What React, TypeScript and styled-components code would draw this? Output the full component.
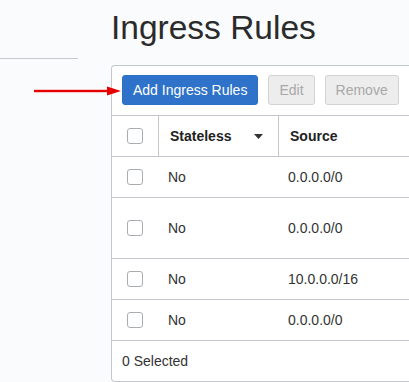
import React from "react";
import styled, { createGlobalStyle } from "styled-components";

type Rule = {
  id: number;
  stateless: string;
  source: string;
  tall?: boolean;
};

const rules: Rule[] = [
  { id: 1, stateless: "No", source: "0.0.0.0/0" },
  { id: 2, stateless: "No", source: "0.0.0.0/0", tall: true },
  { id: 3, stateless: "No", source: "10.0.0.0/16" },
  { id: 4, stateless: "No", source: "0.0.0.0/0" }
];

const App: React.FC = () => {
  return (
    <>
      <GlobalStyle />
      <Page>
        <Sidebar>
          <SidebarDivider />
        </Sidebar>
        <Main>
          <Title>Ingress Rules</Title>
          <Panel>
            <Toolbar>
              <ActionButton $variant="primary">Add Ingress Rules</ActionButton>
              <ActionButton $variant="disabled" disabled>
                Edit
              </ActionButton>
              <ActionButton $variant="disabled" disabled>
                Remove
              </ActionButton>
            </Toolbar>
            <HeaderRow>
              <CheckCell $header>
                <Checkbox />
              </CheckCell>
              <HeaderCell $divider>
                Stateless
                <Caret viewBox="0 0 9 5" aria-hidden>
                  <path d="M0 0h9L4.5 5z" fill="#333" />
                </Caret>
              </HeaderCell>
              <HeaderCell>Source</HeaderCell>
            </HeaderRow>
            {rules.map(rule => (
              <BodyRow key={rule.id} $tall={rule.tall}>
                <CheckCell>
                  <Checkbox />
                </CheckCell>
                <BodyCell>{rule.stateless}</BodyCell>
                <BodyCell>{rule.source}</BodyCell>
              </BodyRow>
            ))}
            <Footer>0 Selected</Footer>
          </Panel>
        </Main>
        <Pointer viewBox="0 0 87 10" aria-hidden>
          <rect x="0" y="3.8" width="75" height="2.4" fill="#e60000" />
          <path d="M73 0.5L87 5L73 9.5z" fill="#e60000" />
        </Pointer>
      </Page>
    </>
  );
};

const GlobalStyle = createGlobalStyle`
  html, body {
    margin: 0;
    padding: 0;
    background: #fafbfc;
    overflow: hidden;
  }
  body {
    font-family: "Liberation Sans", Arial, sans-serif;
    color: #333;
  }
`;

const Page = styled.div`
  position: relative;
  display: flex;
  height: 382px;
`;

const Sidebar = styled.div`
  width: 78px;
  flex-shrink: 0;
`;

const SidebarDivider = styled.div`
  margin-top: 58px;
  border-top: 1px solid #c6cad0;
`;

const Main = styled.div`
  flex: 1;
  min-width: 0;
  margin-left: 33px;
`;

const Title = styled.h1`
  margin: 0;
  padding-top: 8px;
  font-size: 33.5px;
  line-height: 39px;
  font-weight: 400;
  color: #2b2b2b;
  white-space: nowrap;
`;

const Panel = styled.div`
  margin-top: 18px;
  background: #fff;
  border: 1px solid #c4c8ce;
  border-right: none;
  border-radius: 4px 0 0 4px;
`;

const Toolbar = styled.div`
  display: flex;
  gap: 10px;
  padding: 9px 10px 10px;
  border-bottom: 1px solid #c4c8ce;
`;

const ActionButton = styled.button<{ $variant: "primary" | "disabled" }>`
  height: 30px;
  padding: 0 10px;
  border-radius: 3px;
  font-family: "Liberation Sans", Arial, sans-serif;
  font-size: 14px;
  white-space: nowrap;
  border: 1px solid
    ${p => (p.$variant === "primary" ? "#2c6fc4" : "#d0d2d4")};
  background: ${p => (p.$variant === "primary" ? "#2e73c9" : "#ededed")};
  color: ${p => (p.$variant === "primary" ? "#fff" : "#a8a8a8")};
`;

const HeaderRow = styled.div`
  display: grid;
  grid-template-columns: 47px 120px 1fr;
  height: 40px;
  border-bottom: 1px solid #c4c8ce;
`;

const BodyRow = styled.div<{ $tall?: boolean }>`
  display: grid;
  grid-template-columns: 47px 120px 1fr;
  height: ${p => (p.$tall ? "60px" : "40px")};
  border-bottom: 1px solid #c4c8ce;
`;

const CheckCell = styled.div<{ $header?: boolean }>`
  display: flex;
  align-items: center;
  justify-content: center;
  border-right: ${p => (p.$header ? "1px solid #c4c8ce" : "none")};
  margin-right: ${p => (p.$header ? "0" : "1px")};
`;

const Checkbox = styled.span`
  display: block;
  width: 14px;
  height: 14px;
  border: 1px solid #a9adb2;
  border-radius: 3px;
  background: #fff;
`;

const HeaderCell = styled.div<{ $divider?: boolean }>`
  display: flex;
  align-items: center;
  justify-content: space-between;
  padding: 0 15px 0 11px;
  font-size: 14px;
  font-weight: 700;
  color: #222;
  border-right: ${p => (p.$divider ? "1px solid #c4c8ce" : "none")};
`;

const Caret = styled.svg`
  width: 9px;
  height: 5px;
`;

const BodyCell = styled.div`
  display: flex;
  align-items: center;
  padding-left: 9px;
  font-size: 14px;
  color: #333;
`;

const Footer = styled.div`
  display: flex;
  align-items: center;
  height: 40px;
  padding: 0 10px;
  font-size: 14px;
  color: #333;
`;

const Pointer = styled.svg`
  position: absolute;
  left: 34px;
  top: 86px;
  width: 87px;
  height: 10px;
`;

export default App;
